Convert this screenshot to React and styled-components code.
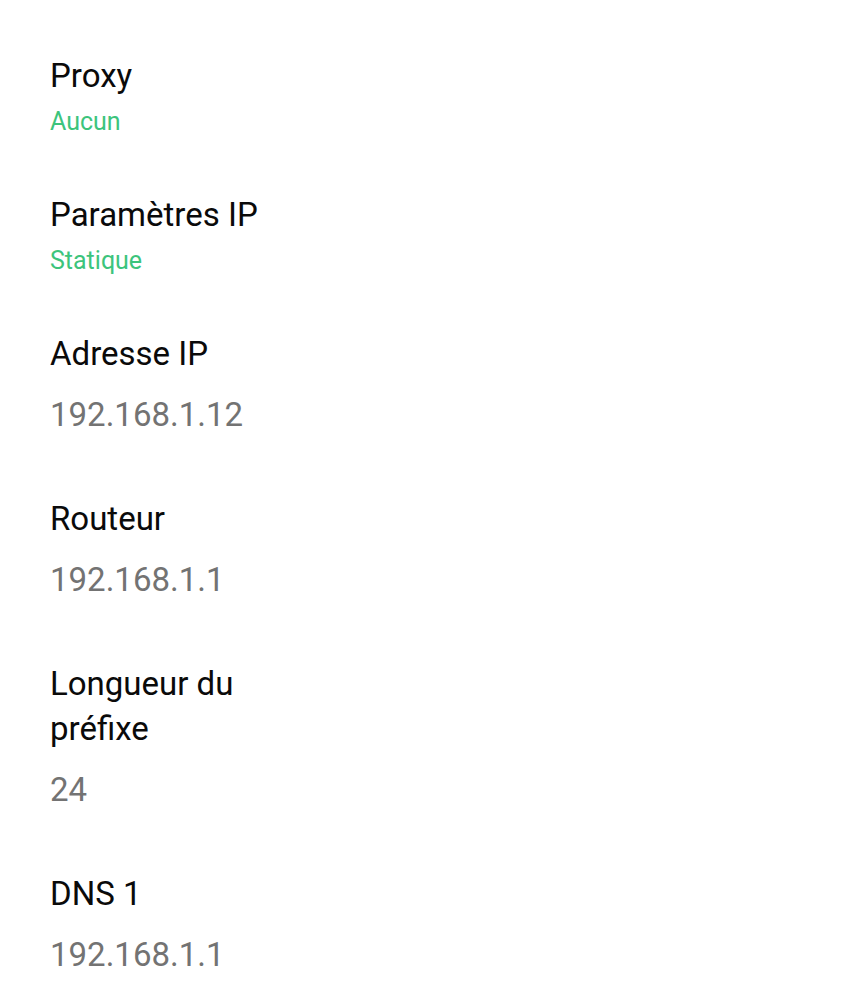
import React from "react";
import styled, { createGlobalStyle } from "styled-components";

const GlobalStyle = createGlobalStyle`
  html, body {
    margin: 0;
    padding: 0;
    background: #ffffff;
  }
  body {
    font-family: Roboto, "Noto Sans", "Liberation Sans", sans-serif;
    -webkit-font-smoothing: antialiased;
  }
`;

const Page = styled.div`
  display: flex;
  flex-direction: column;
  padding: 26px 0 0 50px;
  background: #ffffff;
`;

const Item = styled.div`
  display: flex;
  flex-direction: column;
  padding: 27px 0 27px;
`;

const Title = styled.div`
  max-width: 250px;
  font-size: 33px;
  line-height: 45px;
  color: #0a0a0a;
`;

const Summary = styled.div`
  margin-top: 8px;
  font-size: 25px;
  line-height: 32px;
  color: #3cc47c;
`;

const Value = styled.div`
  margin: 16px 0 5px;
  font-size: 33px;
  line-height: 45px;
  color: #737373;
`;

const settings = [
  { title: "Proxy", summary: "Aucun" },
  { title: "Paramètres IP", summary: "Statique" },
  { title: "Adresse IP", value: "192.168.1.12" },
  { title: "Routeur", value: "192.168.1.1" },
  { title: "Longueur du préfixe", value: "24" },
  { title: "DNS 1", value: "192.168.1.1" },
];

export default function App() {
  return (
    <>
      <GlobalStyle />
      <Page>
        {settings.map((s) => (
          <Item key={s.title}>
            <Title>{s.title}</Title>
            {s.summary && <Summary>{s.summary}</Summary>}
            {s.value && <Value>{s.value}</Value>}
          </Item>
        ))}
      </Page>
    </>
  );
}
